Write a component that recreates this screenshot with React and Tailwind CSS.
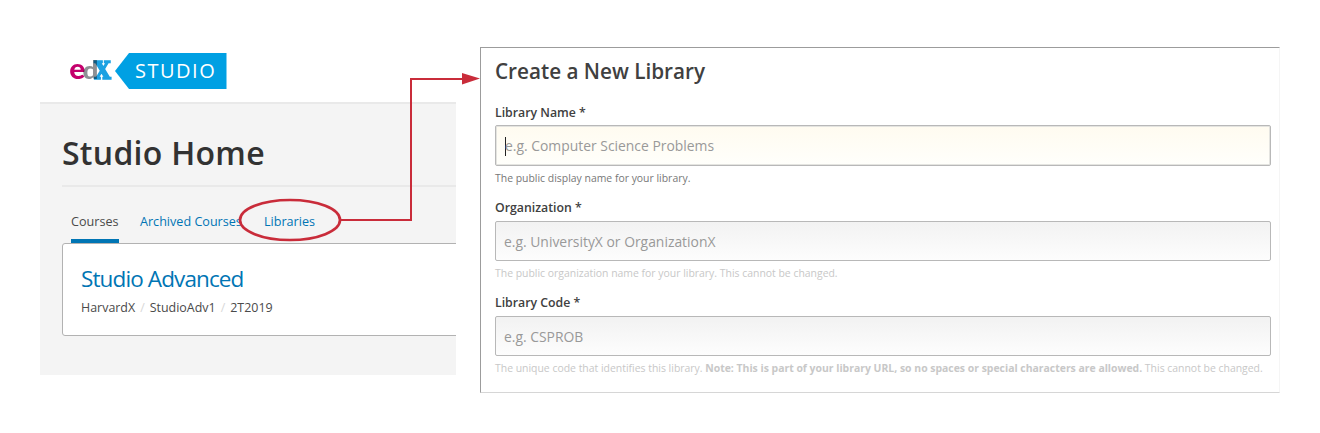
import React from "react";

function EdxLogo() {
  return (
    <svg width="46" height="30" viewBox="68 56 46 30" className="block overflow-visible" aria-label="edX">
      <g style={{ isolation: "isolate" }}>
        <text x="69.3" y="79.4" fontFamily="Lato" fontWeight="900" fontSize="28" fill="#c4006c" textLength="16" lengthAdjust="spacingAndGlyphs">e</text>
        <text x="82.6" y="79.4" fontFamily="Lato" fontWeight="900" fontSize="25.5" fill="#8d9094" textLength="16" lengthAdjust="spacingAndGlyphs" style={{ mixBlendMode: "multiply" }}>d</text>
        <text x="94.2" y="79.2" fontFamily="DejaVu Serif, serif" fontWeight="700" fontSize="24.5" fill="#1ba1e2" stroke="#1ba1e2" strokeWidth="1.7" textLength="16.6" lengthAdjust="spacingAndGlyphs" style={{ mixBlendMode: "multiply" }}>X</text>
      </g>
    </svg>
  );
}

function StudioHome() {
  return (
    <section className="mt-[47px] ml-[40px] h-[328px] w-[416px] overflow-hidden bg-[#f4f4f4]">
      <header className="flex h-[57px] items-start border-b-2 border-[#e9e9e9] bg-white pt-[6px] pl-[28px]">
        <div className="pt-[3px]"><EdxLogo /></div>
        <div className="ml-[1px] flex h-[36px] w-[111.5px] items-center bg-[#00a0e3] pl-[20px] text-[20px] leading-[36px] font-medium tracking-[1.5px] text-white [clip-path:polygon(0_50%,14px_0,100%_0,100%_100%,14px_100%)]">
          STUDIO
        </div>
      </header>
      <div className="pl-[22px]">
        <div className="h-[83px] border-b-2 border-[#e9e9e9] pt-[29px]">
          <h1 className="text-[32px] leading-[40px] font-semibold tracking-[0.28px] text-[#323232]">Studio Home</h1>
        </div>
        <nav className="flex h-[56px] gap-[21px] pt-[25px] pl-[9px] text-[12.6px] leading-[20px] text-[#0075b4]">
          <span className="h-[31px] w-[48px] border-b-4 border-[#0075b4] whitespace-nowrap text-[#4a4a4a]">Courses</span>
          <span className="w-[103px] whitespace-nowrap">Archived Courses</span>
          <span>Libraries</span>
        </nav>
        <article className="h-[93px] w-[410px] rounded-[3px] border-[1.5px] border-[#b2b2b2] bg-white pt-[19px] pl-[18px]">
          <h2 className="text-[22.5px] leading-[31px] tracking-[-0.88px] text-[#0075b4]">Studio Advanced</h2>
          <p className="mt-[4px] flex gap-[5px] text-[12.45px] leading-[19px] text-[#4a4a4a]">
            <span>HarvardX</span>
            <span className="text-[#d8d8d8]">/</span>
            <span>StudioAdv1</span>
            <span className="text-[#d8d8d8]">/</span>
            <span>2T2019</span>
          </p>
        </article>
      </div>
    </section>
  );
}

function Field({ label, placeholder, focused, children }) {
  return (
    <div className="h-[95px]">
      <div className="h-[20px] text-[12.3px] leading-[16px] font-semibold text-[#404040]">{label}</div>
      <div className={focused
        ? "flex h-[41px] w-[776px] items-center rounded-[2px] border-[1.5px] border-[#b8b8b8] bg-linear-to-b from-[#fffbf0] to-[#fffffb] pt-px pl-[9px] shadow-[inset_0_0_0_1px_#e4e4e0]"
        : "mt-px flex h-[40px] w-[776px] items-center rounded-[2px] border-[1.5px] border-[#b8b8b8] bg-linear-to-b from-[#f2f2f2] to-[#fdfdfd] pt-px pl-[8px]"}>
        {focused && <span className="-mr-px h-[19px] w-px bg-[#222]" />}
        <span className="text-[13.9px] leading-[20px] text-[#999]">{placeholder}</span>
      </div>
      <div className={focused
        ? "mt-[4px] text-[10.43px] leading-[17px] whitespace-nowrap text-[#777]"
        : "mt-[4px] text-[10.43px] leading-[17px] whitespace-nowrap text-[#c8c8c8]"}>{children}</div>
    </div>
  );
}

function CreateLibrary() {
  return (
    <section className="mt-[47px] ml-[24px] h-[346px] w-[800px] border-t border-r border-b border-l border-t-[#9c9c9c] border-r-[#f5f5f5] border-b-[#d6d6d6] border-l-[#9c9c9c] bg-white pl-[14px]">
      <h2 className="mt-[8px] h-[49px] text-[20.7px] leading-[31px] font-semibold text-[#404040]">Create a New Library</h2>
      <Field label="Library Name *" placeholder="e.g. Computer Science Problems" focused>
        The public display name for your library.
      </Field>
      <Field label="Organization *" placeholder="e.g. UniversityX or OrganizationX">
        The public organization name for your library. This cannot be changed.
      </Field>
      <Field label="Library Code *" placeholder="e.g. CSPROB">
        The unique code that identifies this library. <b>Note: This is part of your library URL, so no spaces or special characters are allowed.</b> This cannot be changed.
      </Field>
    </section>
  );
}

export default function App() {
  return (
    <main className="relative flex h-[433px] w-[1320px] overflow-hidden bg-white font-['Open_Sans',sans-serif]">
      <StudioHome />
      <CreateLibrary />
      <svg className="absolute inset-0" width="1320" height="433" fill="none" stroke="#c92c3a">
        <ellipse cx="290" cy="220" rx="50" ry="20" strokeWidth="2.7" />
        <path d="M341 220H411V79H463" strokeWidth="2" />
        <path d="M462 73L480 78.5L462 84.5Z" fill="#c92c3a" stroke="none" />
      </svg>
    </main>
  );
}
